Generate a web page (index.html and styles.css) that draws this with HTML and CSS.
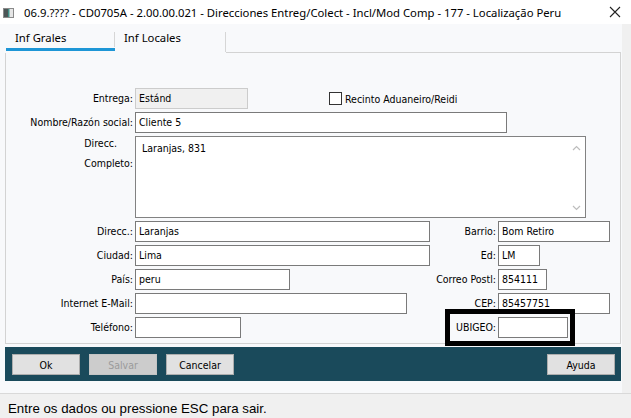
FILE: index.html
```html
<!DOCTYPE html>
<html>
<head>
<meta charset="utf-8">
<link rel="stylesheet" href="styles.css">
</head>
<body>
<div class="window">
  <div class="titlebar">
    <svg class="appicon" width="11" height="10" viewBox="0 0 11 10">
      <rect x="0.5" y="0.5" width="10" height="9" fill="#e6e6e6" stroke="#8a8a8a"/>
      <rect x="1" y="1" width="4" height="8" fill="#4b5656"/>
      <rect x="5" y="1" width="1.5" height="8" fill="#3f8f86"/>
    </svg>
    <span class="title">06.9.???? - CD0705A - 2.00.00.021 - Direcciones Entreg/Colect - Incl/Mod Comp - 177 - Localização Peru</span>
    <svg class="close" width="12" height="12" viewBox="0 0 12 12">
      <path d="M1 1 L11 11 M11 1 L1 11" stroke="#222" stroke-width="1.1" fill="none"/>
    </svg>
  </div>
  <div class="main">
    <div class="content">
      <div class="tabs">
        <div class="tab active">Inf Grales</div>
        <div class="tab second">Inf Locales</div>
        <div class="tab-fill"></div>
      </div>
      <div class="panel">
        <div class="form">
          <div class="lbl">Entrega:</div>
          <div class="wide">
            <div class="field disabled w113">Estánd</div>
            <div class="check"><span class="box"></span><span>Recinto Aduaneiro/Reidi</span></div>
          </div>

          <div class="lbl">Nombre/Razón social:</div>
          <div class="wide"><div class="field w372">Cliente 5</div></div>

          <div class="lbl multi">Direcc.<br>Completo:</div>
          <div class="wide">
            <div class="memo">
              <span class="memo-text">Laranjas, 831</span>
              <div class="scroll">
                <svg width="9" height="6" viewBox="0 0 9 6"><path d="M1 5 L4.5 1.5 L8 5" stroke="#bdbdbd" stroke-width="1.2" fill="none"/></svg>
                <svg width="9" height="6" viewBox="0 0 9 6"><path d="M1 1 L4.5 4.5 L8 1" stroke="#bdbdbd" stroke-width="1.2" fill="none"/></svg>
              </div>
            </div>
          </div>

          <div class="lbl">Direcc.:</div>
          <div><div class="field w295">Laranjas</div></div>
          <div class="lbl">Barrio:</div>
          <div><div class="field w112">Bom Retiro</div></div>

          <div class="lbl">Ciudad:</div>
          <div><div class="field w295">Lima</div></div>
          <div class="lbl">Ed:</div>
          <div><div class="field w42">LM</div></div>

          <div class="lbl">País:</div>
          <div><div class="field w155">peru</div></div>
          <div class="lbl">Correo Postl:</div>
          <div><div class="field w49">854111</div></div>

          <div class="lbl">Internet E-Mail:</div>
          <div><div class="field w272"></div></div>
          <div class="lbl">CEP:</div>
          <div><div class="field w112">85457751</div></div>

          <div class="lbl">Teléfono:</div>
          <div><div class="field w106"></div></div>
          <div class="lbl">UBIGEO:</div>
          <div><div class="field w70"></div></div>
        </div>
      </div>
      <div class="buttonbar">
        <button class="btn">Ok</button>
        <button class="btn off">Salvar</button>
        <button class="btn">Cancelar</button>
        <div class="spacer"></div>
        <button class="btn">Ayuda</button>
      </div>
    </div>
    <div class="strip"></div>
  </div>
  <div class="status">Entre os dados ou pressione ESC para sair.</div>
  <div class="highlight"></div>
</div>
</body>
</html>
```

FILE: styles.css
```css
* { box-sizing: border-box; }
html, body { margin: 0; padding: 0; }
body {
  width: 631px;
  height: 418px;
  overflow: hidden;
  background: #f0f0f0;
  font-family: "DejaVu Sans Condensed", "Liberation Sans", sans-serif;
  font-size: 10.5px;
  color: #000;
}
.window { position: relative; width: 631px; height: 418px; }

.titlebar {
  height: 24px;
  background: #ffffff;
  display: flex;
  align-items: center;
  padding-left: 3px;
}
.appicon { margin-top: 1px; }
.title {
  margin-left: 10px;
  font-family: "Noto Sans", sans-serif;
  font-size: 11.3px;
  color: #000;
  white-space: nowrap;
  flex: 1;
}
.close { margin-right: 10px; }

.main { display: flex; height: 369px; }
.content { width: 622px; background: #f8f9fb; display: flex; flex-direction: column; }
.strip { flex: 1; background: #f0f0f0; }

.tabs { height: 29px; display: flex; padding-left: 6px; }
.tab {
  position: relative;
  font-family: "Noto Sans", sans-serif;
  font-size: 11.3px;
  padding-left: 9px;
  padding-top: 6px;
  height: 27px;
}
.tab.active { width: 109px; border-bottom: 3px solid #1e96d6; }
.tab.active::after {
  content: "";
  position: absolute;
  right: 0; top: 8px;
  width: 1px; height: 15px;
  background: #d6d6d6;
}
.tab.second { width: 111px; }
.tab.second::after {
  content: "";
  position: absolute;
  right: 0; top: 8px;
  width: 1px; height: 20px;
  background: #d6d6d6;
}
.tab-fill { width: 395px; border-bottom: 1px solid #d3d3d3; }

.panel {
  margin-left: 5px;
  width: 616px;
  height: 291px;
  border-left: 1px solid #d3d3d3;
  border-right: 1px solid #d3d3d3;
  border-bottom: 1px solid #d3d3d3;
  padding-top: 35px;
}
.form {
  display: grid;
  grid-template-columns: 129px 297px 66px 1fr;
  grid-template-rows: 21px 21px 82px 21px 21px 21px 21px 21px;
  row-gap: 3px;
}
.lbl {
  text-align: right;
  padding-right: 2px;
  line-height: 21px;
  white-space: nowrap;
}
.lbl.multi {
  justify-self: end;
  text-align: left;
  line-height: 20px;
  margin-top: -3px;
  padding-right: 2px;
}
.wide { grid-column: 2 / 5; display: flex; align-items: center; }

.field {
  height: 21px;
  border: 1px solid #7a7a7a;
  background: #ffffff;
  padding-left: 3px;
  line-height: 19px;
  white-space: nowrap;
  overflow: hidden;
}
.field.disabled { background: #f0f0f0; border-color: #cccccc; }
.w113 { width: 113px; }
.w372 { width: 372px; }
.w295 { width: 295px; }
.w112 { width: 112px; }
.w42 { width: 42px; }
.w155 { width: 155px; }
.w49 { width: 49px; }
.w272 { width: 272px; }
.w106 { width: 106px; }
.w70 { width: 70px; }

.check { display: flex; align-items: center; margin-left: 81px; gap: 3px; }
.check .box { width: 13px; height: 13px; border: 1px solid #333; background: #fff; }

.memo {
  width: 451px;
  height: 82px;
  border: 1px solid #828282;
  background: #fff;
  display: flex;
  justify-content: space-between;
}
.memo-text { padding: 4px 0 0 6px; line-height: 14px; }
.scroll {
  width: 17px;
  display: flex;
  flex-direction: column;
  justify-content: space-between;
  align-items: center;
  padding: 8px 0 6px;
}
.scroll svg { display: block; }

.buttonbar {
  margin-top: 3px;
  margin-left: 5px;
  width: 616px;
  height: 34px;
  background: #1a4a5b;
  display: flex;
  gap: 9px;
  padding: 7px 6px 0 7px;
}
.spacer { flex: 1; }
.btn {
  width: 68px;
  height: 21px;
  background: #e1e1e1;
  border: 1px solid #adadad;
  font-family: "DejaVu Sans Condensed", "Liberation Sans", sans-serif;
  font-size: 10.5px;
  color: #000;
  padding: 0;
  margin: 0;
}
.btn.off { background: #cccccc; color: #9b9b9b; border-color: #c4c4c4; }

.status {
  height: 25px;
  border-top: 1px solid #d9d9d9;
  background: #f0f0f0;
  font-family: "Liberation Sans", sans-serif;
  font-size: 13.3px;
  padding-left: 8px;
  line-height: 29px;
}

.highlight {
  position: absolute;
  left: 445px;
  top: 309px;
  width: 130px;
  height: 37px;
  border: 5px solid #000;
}
```
